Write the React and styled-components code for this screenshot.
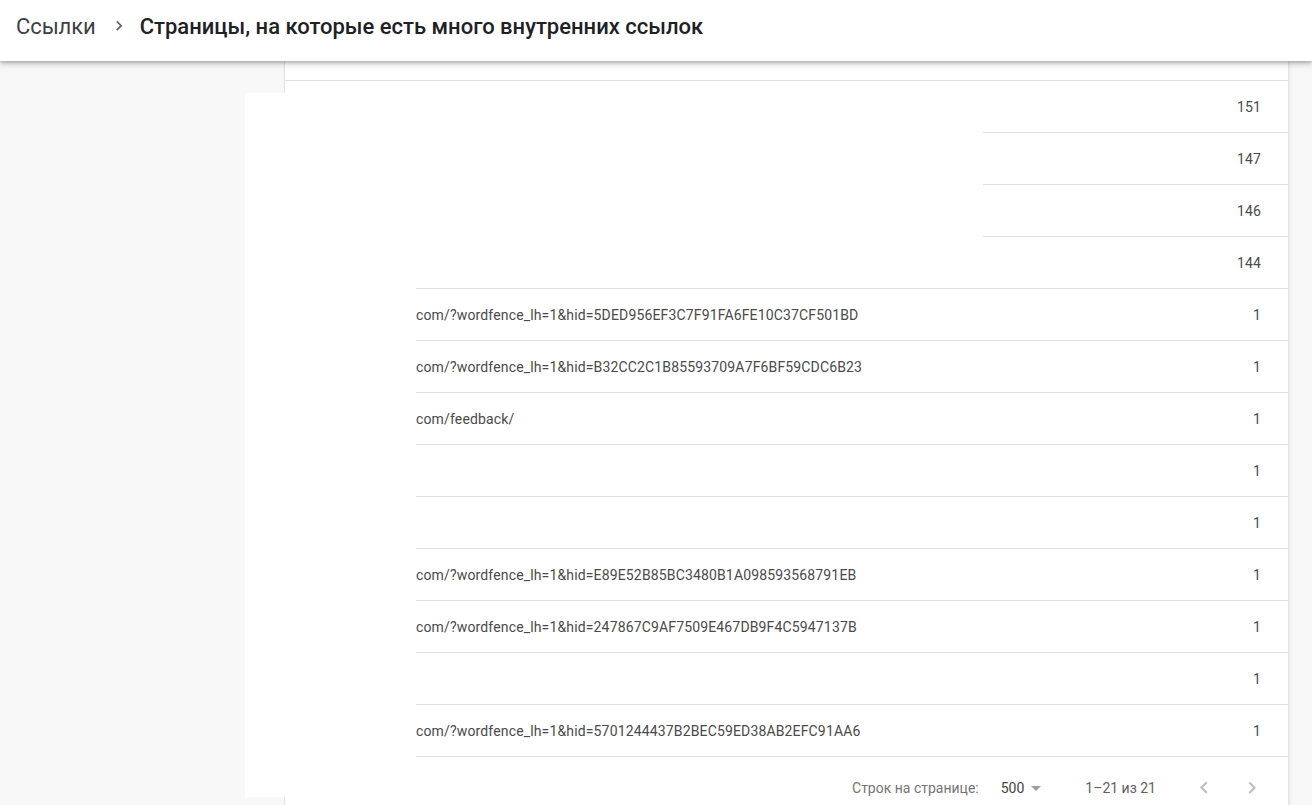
import React from 'react'
import styled, { createGlobalStyle } from 'styled-components'

const GlobalStyle = createGlobalStyle`
  html, body {
    margin: 0;
    padding: 0;
    overflow: hidden;
    background: #f8f8f8;
    font-family: Roboto, 'Noto Sans', Arial, sans-serif;
  }
`

const Page = styled.div`
  position: relative;
  min-height: 100vh;
`

const TopBar = styled.header`
  position: relative;
  z-index: 3;
  height: 61px;
  box-sizing: border-box;
  display: flex;
  align-items: center;
  padding: 0 0 9px 16px;
  background: #fff;
  box-shadow: 0 2px 4px rgba(0, 0, 0, 0.28), 0 4px 9px rgba(0, 0, 0, 0.08);
`

const Crumb = styled.span`
  font-size: 22px;
  color: #3c4043;
  letter-spacing: -0.1px;
`

const CrumbSep = styled.span`
  display: flex;
  margin: 0 11px 0 13px;
  color: #5f6368;
`

const Title = styled.h1`
  margin: 0;
  font-size: 22px;
  font-weight: 500;
  color: #202124;
`

const Content = styled.main`
  padding: 0 24px 0 285px;
`

const Card = styled.section`
  background: #fff;
  box-shadow: 0 0 0 1px #e4e4e4, 1px 0 4px rgba(0, 0, 0, 0.1);
`

const HeadRow = styled.div`
  height: 19px;
  border-bottom: 1px solid #e0e0e0;
`

const Row = styled.div`
  height: 51px;
  display: flex;
  align-items: center;
  border-bottom: 1px solid #e0e0e0;
  font-size: 14px;
  letter-spacing: 0.15px;
  color: #4a4a4a;
`

const UrlCell = styled.div`
  flex: 1;
  padding-left: 131px;
  white-space: nowrap;
  overflow: hidden;
`

const CountCell = styled.div`
  padding-right: 27px;
  text-align: right;
`

const Footer = styled.div`
  height: 62px;
  display: flex;
  align-items: center;
  justify-content: flex-end;
  padding-right: 12px;
  font-size: 14px;
  color: #757575;
`

const PerPage = styled.div`
  display: flex;
  align-items: center;
  margin: 0 37px 0 22px;
  color: #444;
`

const Range = styled.span`
  color: #616161;
  margin-right: 24px;
`

const IconButton = styled.span`
  width: 48px;
  height: 48px;
  display: flex;
  align-items: center;
  justify-content: center;
  color: #bdbdbd;
`

// white boxes that hide the site address in the screenshot
const Redaction = styled.div`
  position: absolute;
  z-index: 2;
  top: ${p => p.$top}px;
  left: ${p => p.$left}px;
  width: ${p => p.$width}px;
  height: ${p => p.$height}px;
  background: #fff;
`

const rows = [
  { url: '', count: 151 },
  { url: '', count: 147 },
  { url: '', count: 146 },
  { url: '', count: 144 },
  { url: 'com/?wordfence_lh=1&hid=5DED956EF3C7F91FA6FE10C37CF501BD', count: 1 },
  { url: 'com/?wordfence_lh=1&hid=B32CC2C1B85593709A7F6BF59CDC6B23', count: 1 },
  { url: 'com/feedback/', count: 1 },
  { url: '', count: 1 },
  { url: '', count: 1 },
  { url: 'com/?wordfence_lh=1&hid=E89E52B85BC3480B1A098593568791EB', count: 1 },
  { url: 'com/?wordfence_lh=1&hid=247867C9AF7509E467DB9F4C5947137B', count: 1 },
  { url: '', count: 1 },
  { url: 'com/?wordfence_lh=1&hid=5701244437B2BEC59ED38AB2EFC91AA6', count: 1 }
]

const Chevron = ({ dir = 'right', size = 24 }) => (
  <svg width={size} height={size} viewBox='0 0 24 24' fill='currentColor'>
    {dir === 'right' ? (
      <path d='M8.59 16.34l4.58-4.59-4.58-4.59L10 5.75l6 6-6 6z' />
    ) : (
      <path d='M15.41 16.09l-4.58-4.59 4.58-4.59L14 5.5l-6 6 6 6z' />
    )}
  </svg>
)

const App = () => {
  return (
    <Page>
      <GlobalStyle />
      <TopBar>
        <Crumb>Ссылки</Crumb>
        <CrumbSep>
          <Chevron size={20} />
        </CrumbSep>
        <Title>Страницы, на которые есть много внутренних ссылок</Title>
      </TopBar>
      <Content>
        <Card>
          <HeadRow />
          {rows.map((row, index) => (
            <Row key={index}>
              <UrlCell>{row.url}</UrlCell>
              <CountCell>{row.count}</CountCell>
            </Row>
          ))}
          <Footer>
            <span>Строк на странице:</span>
            <PerPage>
              500
              <svg width='24' height='24' viewBox='0 0 24 24' fill='#9e9e9e'>
                <path d='M7 10l5 5 5-5z' />
              </svg>
            </PerPage>
            <Range>1–21 из 21</Range>
            <IconButton>
              <Chevron dir='left' />
            </IconButton>
            <IconButton>
              <Chevron />
            </IconButton>
          </Footer>
        </Card>
      </Content>
      <Redaction $top={93} $left={245} $width={171} $height={704} />
      <Redaction $top={81} $left={285} $width={698} $height={206} />
    </Page>
  )
}

export default App
